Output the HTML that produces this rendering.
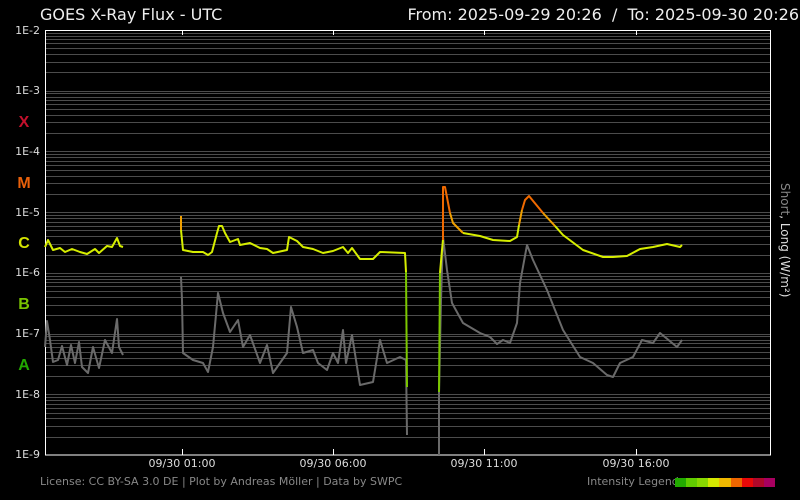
<!DOCTYPE html>
<html><head><meta charset="utf-8"><style>
body{margin:0;background:#000;width:800px;height:500px;overflow:hidden;font-family:"DejaVu Sans","Liberation Sans",sans-serif}
</style></head><body>
<svg width="800" height="500" viewBox="0 0 800 500" xmlns="http://www.w3.org/2000/svg" style="position:absolute;left:0;top:0">
<rect width="800" height="500" fill="#000"/>
<path stroke="#4c4c4c" stroke-width="1" fill="none" d="
M46 33.5H770M46 36.5H770M46 39.5H770M46 43.5H770M46 48.5H770M46 54.5H770M46 62.5H770M46 72.5H770M46 91.5H770
M46 93.5H770M46 97.5H770M46 100.5H770M46 104.5H770M46 109.5H770M46 115.5H770M46 122.5H770M46 133.5H770M46 151.5H770
M46 154.5H770M46 157.5H770M46 161.5H770M46 165.5H770M46 170.5H770M46 176.5H770M46 183.5H770M46 194.5H770M46 212.5H770
M46 215.5H770M46 218.5H770M46 222.5H770M46 226.5H770M46 230.5H770M46 236.5H770M46 244.5H770M46 255.5H770M46 273.5H770
M46 276.5H770M46 279.5H770M46 282.5H770M46 286.5H770M46 291.5H770M46 297.5H770M46 305.5H770M46 315.5H770M46 334.5H770
M46 336.5H770M46 340.5H770M46 343.5H770M46 347.5H770M46 352.5H770M46 358.5H770M46 365.5H770M46 376.5H770M46 394.5H770
M46 397.5H770M46 400.5H770M46 404.5H770M46 408.5H770M46 413.5H770M46 418.5H770M46 426.5H770M46 437.5H770"/>
<rect x="45.5" y="30.5" width="725" height="424.5" fill="none" stroke="#fff" stroke-width="1"/>
<g stroke="#fff"><line x1="182.5" y1="30" x2="182.5" y2="35"/><line x1="333.5" y1="30" x2="333.5" y2="35"/><line x1="484.5" y1="30" x2="484.5" y2="35"/><line x1="636.5" y1="30" x2="636.5" y2="35"/>
<line x1="182.5" y1="455" x2="182.5" y2="449"/><line x1="333.5" y1="455" x2="333.5" y2="449"/><line x1="484.5" y1="455" x2="484.5" y2="449"/><line x1="636.5" y1="455" x2="636.5" y2="449"/></g>
<g fill="none" stroke-width="2" stroke-linejoin="round">
<polyline stroke="#6a6a6a" points="45,347 47,321 50,340 53,362 58,360 62,346 67,365 71,345 75,363 79,342 82,367 88,373 93,347 99,368 105,340 112,353 117,319 119,347 123,355"/>
<polyline stroke="#6a6a6a" points="181,277 182,300 183,353 193,360 203,363 208,372 213,347 218,293 223,313 230,332 238,320 243,347 250,335 260,363 267,345 273,373 287,353 291,307 297,327 303,353 313,350 318,363 327,370 333,353 338,363 343,330 346,363 352,335 360,385 373,382 380,340 387,363 400,357 406,360 407,435"/>
<polyline stroke="#6a6a6a" points="439,455 439,393 441,300 443,237 447,270 452,303 463,323 480,333 490,337 497,344 503,340 510,343 517,323 520,283 527,245 533,260 547,290 563,330 580,357 593,363 607,375 613,377 620,363 633,357 642,340 653,343 660,333 677,347 682,340"/>
<polyline stroke="#d6ee00" points="45,247 48,240 53,250 60,248 65,252 72,249 80,252 87,254 95,249 99,253 107,246 112,247 117,238 120,246 123,247"/>
<polyline stroke="#d6ee00" points="181,230 183,250 193,252 203,252 208,255 212,252 217,233 219,226 222,226 225,233 230,242 238,239 240,245 250,243 260,248 267,249 273,253 287,250 289,237 297,241 303,247 313,249 323,253 333,251 343,247 348,253 352,248 360,259 373,259 380,252 405,253 406,272"/>
<polyline stroke="#f0a000" points="181,216 181,230"/>
<polyline stroke="#7cc800" points="406,272 407,387"/>
<polyline stroke="#7cc800" points="439,392 440,273"/>
<polyline stroke="#d6ee00" points="440,273 442,250 443,240"/>
<polyline stroke="#f06a00" points="443,240 443,187 445,187 450,213"/>
<polyline stroke="#f0a000" points="450,213 453,223 463,233"/>
<polyline stroke="#d6ee00" points="463,233 480,236 493,240 510,241 517,237 519,225"/>
<polyline stroke="#f0a000" points="519,225 520,220 522,210"/>
<polyline stroke="#f06a00" points="522,210 525,200 529,196 543,213"/>
<polyline stroke="#f0a000" points="543,213 555,226"/>
<polyline stroke="#d6ee00" points="555,226 563,235 583,250 603,257 613,257 627,256 640,249 653,247 667,244 680,247 682,245"/>
</g>
<g fill="#ddd" font-size="11" text-anchor="end">
<text x="40" y="34">1E-2</text><text x="40" y="94">1E-3</text><text x="40" y="155">1E-4</text><text x="40" y="216">1E-5</text><text x="40" y="276">1E-6</text><text x="40" y="337">1E-7</text><text x="40" y="398">1E-8</text><text x="40" y="458">1E-9</text>
</g>
<g font-size="16" font-weight="bold" font-family="Liberation Sans,sans-serif" text-anchor="middle">
<text x="24" y="127" fill="#c4102c">X</text><text x="24" y="188" fill="#e8600a">M</text><text x="24" y="248" fill="#d4e400">C</text><text x="24" y="309" fill="#7ac400">B</text><text x="24" y="370" fill="#22a800">A</text>
</g>
<g fill="#ddd" font-size="11" text-anchor="middle">
<text x="182" y="467">09/30 01:00</text><text x="333" y="467">09/30 06:00</text><text x="484" y="467">09/30 11:00</text><text x="636" y="467">09/30 16:00</text>
</g>
<text x="40" y="20" fill="#eee" font-size="16">GOES X-Ray Flux - UTC</text>
<text x="799" y="20" fill="#eee" font-size="16" text-anchor="end" xml:space="preserve">From: 2025-09-29 20:26 &#160;/&#160; To: 2025-09-30 20:26</text>
<text x="40" y="485" fill="#888" font-size="11">License: CC BY-SA 3.0 DE | Plot by Andreas Möller | Data by SWPC</text>
<text x="587" y="485" fill="#888" font-size="11">Intensity Legend</text>
<g>
<rect x="675" y="478" width="12" height="9" fill="#22aa00"/><rect x="686" y="478" width="12" height="9" fill="#60cc00"/><rect x="697" y="478" width="12" height="9" fill="#88d800"/><rect x="708" y="478" width="12" height="9" fill="#d4e800"/><rect x="719" y="478" width="12" height="9" fill="#f0b800"/><rect x="731" y="478" width="12" height="9" fill="#ee6600"/><rect x="742" y="478" width="12" height="9" fill="#e80808"/><rect x="753" y="478" width="12" height="9" fill="#b0082a"/><rect x="764" y="478" width="11" height="9" fill="#a80060"/>
</g>
<text transform="translate(781,183) rotate(90)" font-size="12"><tspan fill="#888">Short</tspan><tspan fill="#ddd">, Long (W/m²)</tspan></text>
</svg>
</body></html>
